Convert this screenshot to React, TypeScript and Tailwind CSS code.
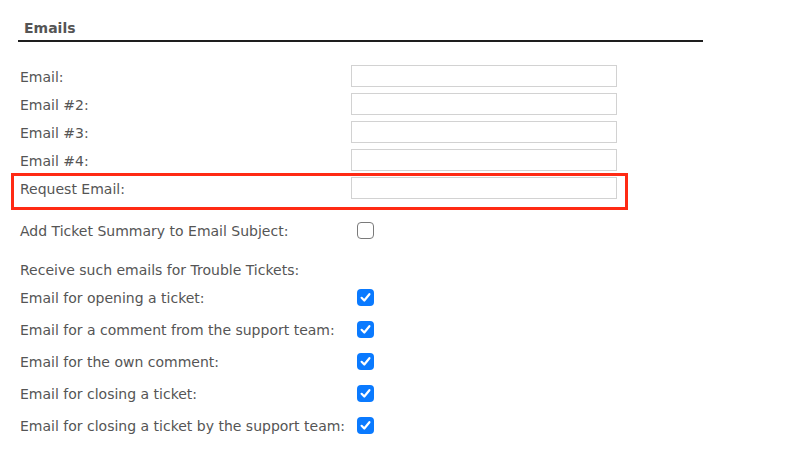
import React from "react";

const font = { fontFamily: '"DejaVu Sans", Verdana, sans-serif' };

function Check({ checked }: { checked: boolean }) {
  if (checked) {
    return (
      <div className="w-[17px] h-[17px] rounded-[4px] bg-[#0a7aff] flex items-center justify-center">
        <svg width="13" height="13" viewBox="0 0 13 13" fill="none">
          <path d="M2.6 6.8 L5.3 9.5 L10.4 3.2" stroke="white" strokeWidth="2.2" strokeLinecap="round" strokeLinejoin="round" />
        </svg>
      </div>
    );
  }
  return <div className="w-[17px] h-[17px] rounded-[4px] border-[1.5px] border-[#7a7a7a] bg-white" />;
}

const emailRows = ["Email:", "Email #2:", "Email #3:", "Email #4:", "Request Email:"];
const ticketRows = [
  "Email for opening a ticket:",
  "Email for a comment from the support team:",
  "Email for the own comment:",
  "Email for closing a ticket:",
  "Email for closing a ticket by the support team:",
];

export default function App() {
  return (
    <div className="relative w-[800px] h-[458px] bg-white text-[#555] text-[14px]" style={font}>
      <div className="pl-[18px] w-[703px]">
        <div className="pt-[19px] pl-[6px] pb-[3px] leading-[18px] font-bold border-b-2 border-[#1e1e1e]">Emails</div>
        <div className="mt-[20px] pl-[2px]">
          {emailRows.map((l) => (
            <div key={l} className="h-[28px] flex items-center">
              <div className="w-[331px] leading-[18px] pt-[2px]">{l}</div>
              <div className="w-[266px] h-[22px] border border-[#d2d2d2] bg-white" />
            </div>
          ))}
          <div className="mt-[14px] h-[28px] flex items-center">
            <div className="w-[331px] leading-[18px] pt-[2px]">Add Ticket Summary to Email Subject:</div>
            <div className="ml-[6px]"><Check checked={false} /></div>
          </div>
          <div className="mt-[13px] h-[24px] flex items-center leading-[18px] pt-[2px]">Receive such emails for Trouble Tickets:</div>
          {ticketRows.map((l) => (
            <div key={l} className="h-[32px] flex items-center">
              <div className="w-[331px] leading-[18px] pt-[2px]">{l}</div>
              <div className="ml-[6px]"><Check checked={true} /></div>
            </div>
          ))}
        </div>
      </div>
      <div className="absolute left-[11px] top-[173px] w-[617px] h-[37px] border-[3px] border-[#ff2a14]" />
    </div>
  );
}
